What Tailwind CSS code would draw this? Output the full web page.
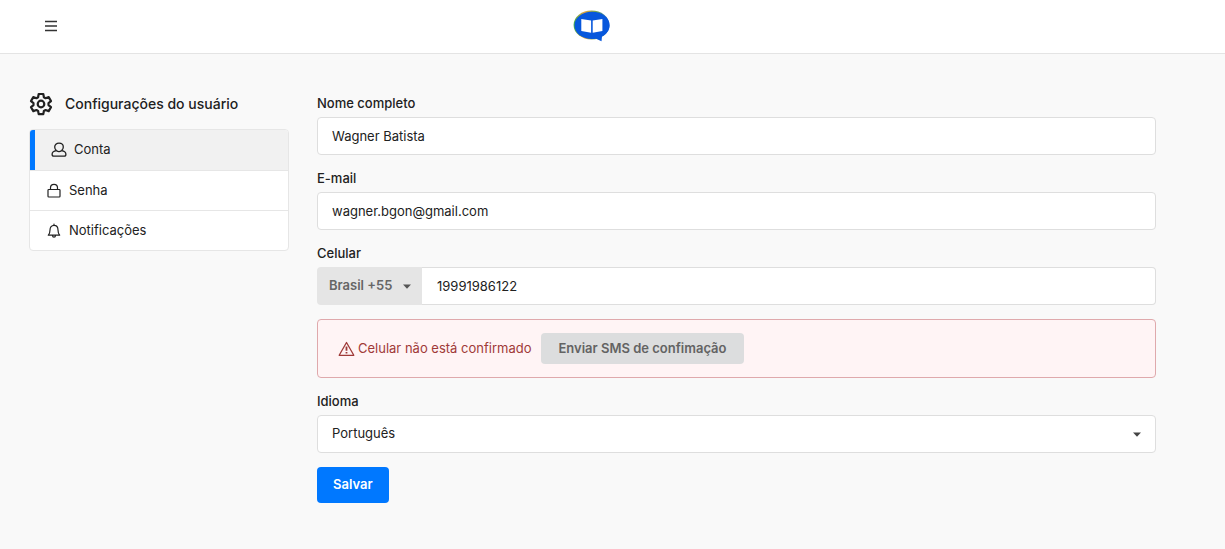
<!DOCTYPE html>
<html lang="pt-BR">
<head>
  <meta charset="UTF-8" />
  <meta name="viewport" content="width=device-width, initial-scale=1.0"/>
  <title>Configurações do usuário</title>
  <script src="https://cdn.jsdelivr.net/npm/@tailwindcss/browser@4"></script>
</head>
<body class="bg-[#f9f9f9] min-h-screen font-['Inter',sans-serif] text-[13px] text-[#212121]">
  <header class="bg-white border-b border-[#e4e4e4] h-[54px] grid grid-cols-3 items-center pl-11 pr-[85px] pb-[2px]">
    <button type="button" aria-label="Menu" class="w-4 h-4">
      <svg class="w-[14px] h-4" viewBox="0 0 14 16" fill="none" stroke="#333" stroke-width="1.5">
        <path d="M1 3.500h12M1 8h12M1 12.500h12" />
      </svg>
    </button>
    <a href="#" aria-label="Início" class="justify-self-center">
      <svg class="w-[38px] h-8" viewBox="0 0 38 32">
        <defs>
          <linearGradient id="rim" x1="0" y1="0" x2="1" y2="0">
            <stop offset="0" stop-color="#3fae49" />
            <stop offset=".3" stop-color="#e8a33b" />
            <stop offset=".65" stop-color="#6aa84f" />
            <stop offset="1" stop-color="#0b57dc" />
          </linearGradient>
        </defs>
        <ellipse cx="18.500" cy="15" rx="17.900" ry="14.400" fill="url(#rim)" />
        <path d="M19 1.800c9.800 0 17.600 6 17.600 13.600 0 4.600-2.900 8.600-7.600 11.100l-.5 4.700-5.500-2.500c-1.300.2-2.600.3-4 .3C9.300 29 1.500 23 1.500 15.400S9.300 1.800 19 1.800z" fill="#0757dc" />
        <path d="M8.300 8.900l9.800 1.600v12.300L8.300 21zM29.400 8.900l-9.700 1.600v12.300l9.700-1.800z" fill="#fff" />
      </svg>
    </a>
  </header>

  <div class="flex items-start gap-7 pl-[29px] pr-[69px] py-10">
    <aside class="w-[260px] shrink-0">
      <h1 class="flex items-center gap-3 h-5 mb-[15px] text-sm font-medium">
        <svg class="w-6 h-6 shrink-0" viewBox="0 0 24 24" fill="none" stroke="currentColor" stroke-width="2.200" stroke-linejoin="round">
          <path d="M9.700 2h4.600l.6 3.200 1.700 1 3.100-1.100 2.300 4-2.500 2.100v1.900l2.500 2.100-2.300 3.900-3.100-1.100-1.700 1-.6 3.100H9.700l-.6-3.100-1.700-1-3.100 1.100L2 15.200l2.500-2.100v-1.900L2 9.100l2.300-4 3.100 1.100 1.700-1z" />
          <circle cx="12" cy="12" r="3.300" />
        </svg>
        <span>Configurações do usuário</span>
      </h1>
      <nav class="bg-white border border-[#e6e6e6] rounded overflow-hidden">
        <a href="#" class="flex items-center gap-[7px] h-10 pl-4 border-l-5 border-[#0078ff] bg-[#f1f1f1]">
          <svg class="w-4 h-4" viewBox="0 0 16 16" fill="none" stroke="currentColor" stroke-width="1.300" stroke-linejoin="round">
            <path d="M5.400 8.600C4.300 7.700 3.700 6.500 3.700 5.100 3.700 2.800 5.500 1.200 8 1.200s4.300 1.600 4.300 3.900c0 1.400-.6 2.600-1.700 3.500M5.400 8.600c-2.700.4-4.300 1.700-4.300 3.600 0 1.400.6 2 1.700 2h10.400c1.100 0 1.700-.6 1.700-2 0-1.900-1.600-3.200-4.300-3.600M5.400 8.600c1.500 1.200 3.700 1.200 5.200 0" />
          </svg>
          Conta
        </a>
        <a href="#" class="flex items-center gap-[7px] h-10 pl-4 border-t border-[#e6e6e6]">
          <svg class="w-4 h-4" viewBox="0 0 16 16" fill="none" stroke="currentColor" stroke-width="1.200" stroke-linejoin="round">
            <rect x="2" y="6.500" width="12" height="7.500" rx=".8" />
            <path d="M4.500 6.500V4.800a3.500 3.500 0 0 1 7 0v1.700" />
          </svg>
          Senha
        </a>
        <a href="#" class="flex items-center gap-[7px] h-10 pl-4 border-t border-[#e6e6e6]">
          <svg class="w-4 h-4" viewBox="0 0 16 16" fill="none" stroke="currentColor" stroke-width="1.200" stroke-linejoin="round" stroke-linecap="round">
            <path d="M8 1v1.200M2.300 12.200c1.300-1.200 1.700-2.700 1.700-5.200C4 4.200 5.500 2.300 8 2.300S12 4.200 12 7c0 2.500.4 4 1.700 5.200zM6.500 12.500c0 2.200 3 2.200 3 0" />
          </svg>
          Notificações
        </a>
      </nav>
    </aside>

    <form class="flex-1 flex flex-col gap-[14px]">
      <div>
        <label for="nome" class="block mb-1 leading-[19px] font-medium">Nome completo</label>
        <input id="nome" type="text" value="Wagner Batista" class="block w-full h-[38px] px-[14px] bg-white border border-[#dedede] rounded" />
      </div>
      <div>
        <label for="email" class="block mb-1 leading-[19px] font-medium">E-mail</label>
        <input id="email" type="email" value="wagner.bgon@gmail.com" class="block w-full h-[38px] px-[14px] bg-white border border-[#dedede] rounded" />
      </div>
      <div>
        <label for="celular" class="block mb-1 leading-[19px] font-medium">Celular</label>
        <div class="flex">
          <div class="relative w-[105px] shrink-0">
            <select aria-label="Código do país" class="appearance-none w-full h-[38px] pl-3 bg-[#e5e5e5] font-semibold text-[#666] rounded-l">
              <option>Brasil +55</option>
            </select>
            <svg class="absolute right-[11px] top-[17px] w-2 h-[5px] pointer-events-none" viewBox="0 0 8 5" fill="#555"><path d="M0 .5h8L4 4.700z" /></svg>
          </div>
          <input id="celular" type="tel" value="19991986122" class="flex-1 min-w-0 h-[38px] px-[15px] bg-white border border-l-0 border-[#dedede] rounded-r" />
        </div>
      </div>
      <div class="flex items-center h-[59px] pl-5 bg-[#fff4f5] border border-[#dfa9ac] rounded text-[#9f3a38]">
        <svg class="w-[17px] h-4 mr-[3px]" viewBox="0 0 17 16" fill="none" stroke="currentColor" stroke-width="1.300" stroke-linejoin="round">
          <path d="M8.500 1.500L15.800 14.300H1.200z" />
          <path d="M8.500 5.600v4.200M8.500 10.900v1.600" stroke-width="1.800" />
        </svg>
        Celular não está confirmado
        <button type="button" class="ml-[10px] h-[31px] px-[17px] bg-[#dcddde] rounded font-semibold text-[#636363]">Enviar SMS de confimação</button>
      </div>
      <div>
        <label for="idioma" class="block mb-1 leading-[19px] font-medium">Idioma</label>
        <div class="relative">
          <select id="idioma" class="appearance-none block w-full h-[38px] px-[14px] bg-white border border-[#dedede] rounded">
            <option>Português</option>
          </select>
          <svg class="absolute right-[15px] top-[17px] w-2 h-[5px] pointer-events-none" viewBox="0 0 8 5" fill="#444"><path d="M0 .5h8L4 4.700z" /></svg>
        </div>
      </div>
      <button type="submit" class="self-start h-9 px-4 bg-[#0078ff] rounded font-semibold text-white">Salvar</button>
    </form>
  </div>
</body>
</html>
